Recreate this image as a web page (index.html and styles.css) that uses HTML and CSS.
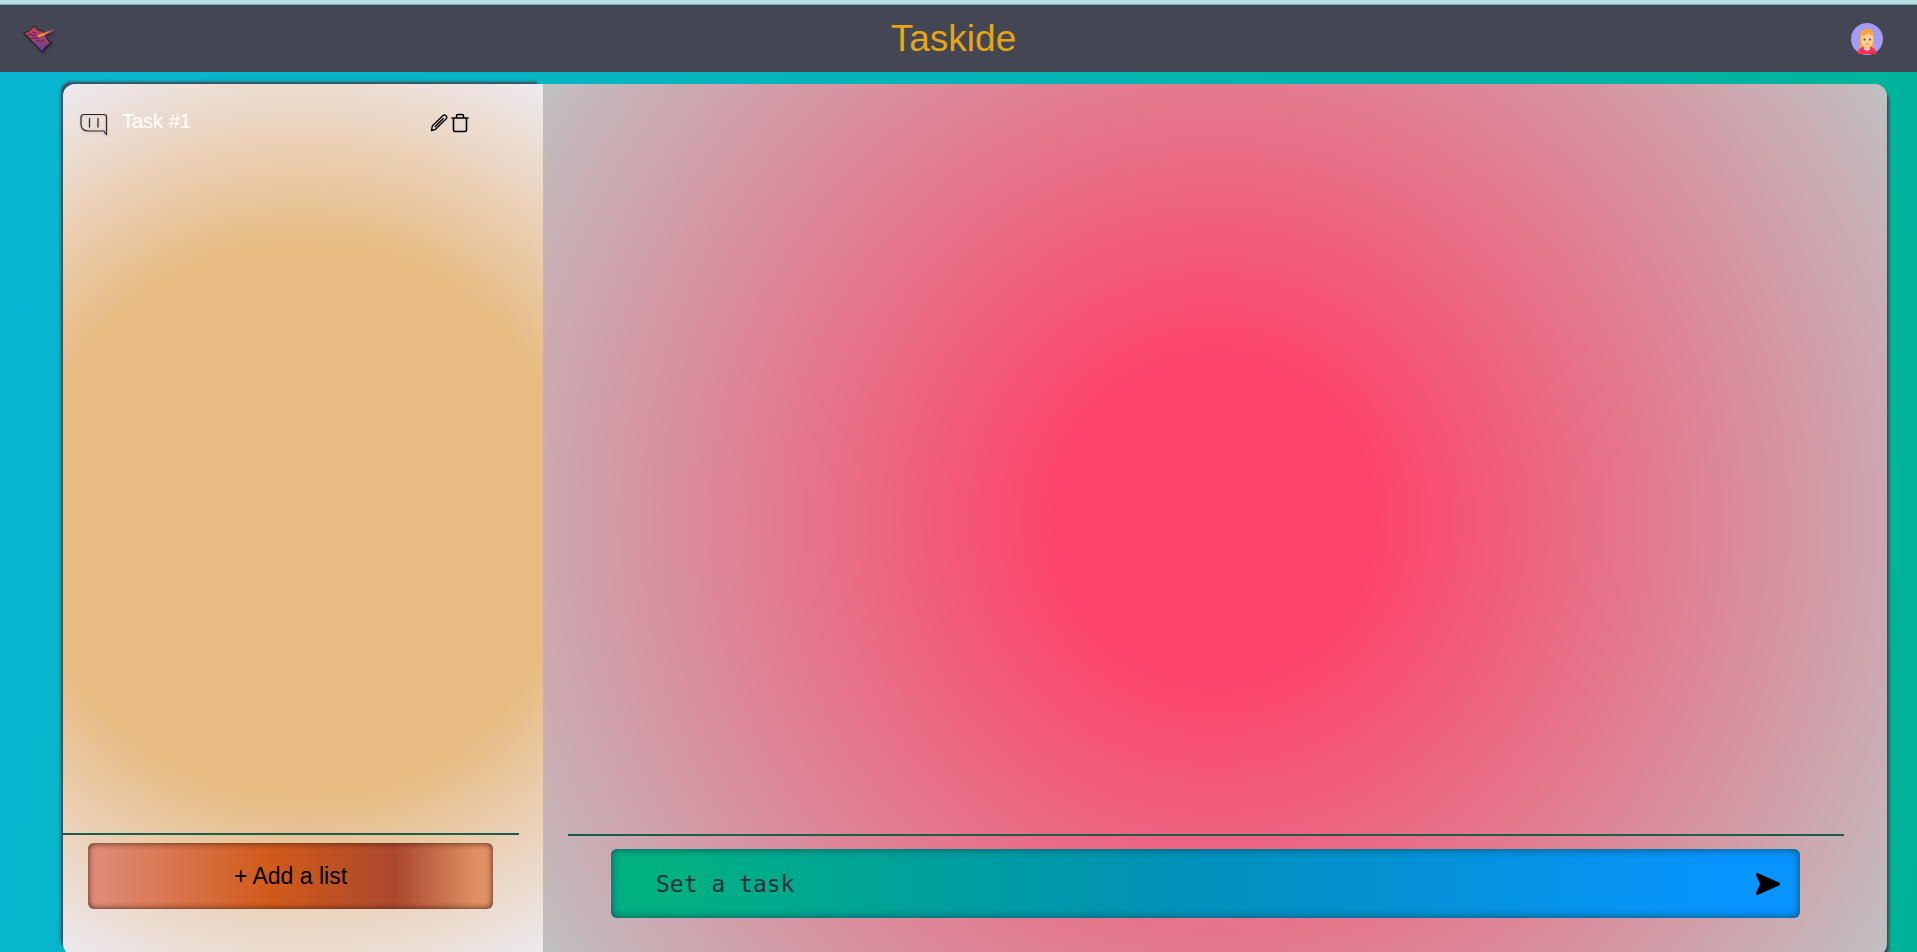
FILE: index.html
```html
<!DOCTYPE html>
<html lang="en">
<head>
<meta charset="utf-8">
<title>Taskide</title>
<link rel="stylesheet" href="styles.css">
</head>
<body>
<header class="header">
  <a class="logo" href="#" aria-label="Home">
    <svg width="36" height="36" viewBox="0 0 36 36">
      <defs>
        <linearGradient id="paper" x1="0" y1="0" x2="0" y2="1"><stop offset="0" stop-color="#cf3f48"/><stop offset="1" stop-color="#6a3fa0"/></linearGradient>
        <linearGradient id="pen" gradientUnits="userSpaceOnUse" x1="18" y1="15" x2="33" y2="8"><stop offset="0" stop-color="#ffa51f"/><stop offset=".35" stop-color="#f0953a"/><stop offset="1" stop-color="#8c3478"/></linearGradient>
      </defs>
      <path d="M13.500 4.500Q17 10 23 10L28 19Q30 22.500 32 21.500Q25 24 22.500 31L3.500 11.500Q11 11 13.500 4.500Z" fill="url(#paper)" stroke="#22192b" stroke-width="1"/>
      <path d="M8 14q3-2 4 0t4-1M11 18q3-3 4-1t4-1M16 21q3-3 4-1t5-2M12 11l4 1" fill="none" stroke="#5a2049" stroke-width="1"/>
      <path d="M19 15L32.500 9.500" stroke="url(#pen)" stroke-width="2.200" stroke-linecap="round"/>
    </svg>
  </a>
  <h1 class="title">Taskide</h1>
  <a class="avatar" href="#" aria-label="Profile">
    <svg width="32" height="32" viewBox="0 0 32 32">
      <circle cx="16" cy="16" r="16" fill="#a79af7"/>
      <path d="M9 25V13Q9 6 16 6L20 5.500L19.500 7Q23 8 23 13V25Z" fill="#fca53b"/>
      <path d="M13 21h6v4q-3 3-6 0Z" fill="#f3c288"/>
      <path d="M10 13Q15 13 18 10Q20 13 22 13V17Q22 24 16 24T10 17Z" fill="#fccf95"/>
      <path d="M7 31Q7 24 13 24Q16 29 19 24Q25 24 25.500 31Z" fill="#ff2f55"/>
      <path d="M13 24Q16 29 19 24V26Q16 29 13 26Z" fill="#fff"/>
      <circle cx="13.500" cy="16.500" r="1" fill="#4b3a35"/><circle cx="19" cy="16.500" r="1" fill="#4b3a35"/>
      <path d="M14.500 21q1.500 1 3 0" fill="none" stroke="#d46a50" stroke-width=".8"/>
    </svg>
  </a>
</header>
<main class="board">
  <aside class="lists">
    <ul class="list-items">
      <li class="list-item">
        <svg class="chat-icon" width="28" height="24" viewBox="0 0 28 24" fill="none" stroke="#2b2528" stroke-width="1.200">
          <path d="M4 1.500H24Q26.500 1.500 26.500 4V21.500Q24.500 20.500 24 18H9Q1 18 1 11V4.500Q1 1.500 4 1.500Z"/>
          <path d="M9.500 5V14.500M18 5V14.500"/>
        </svg>
        <span class="list-name">Task #1</span>
        <span class="list-actions">
          <button class="icon-button" aria-label="Rename list">
            <svg width="18" height="20" viewBox="0 0 18 20" fill="none" stroke="#000" stroke-width="1.400" stroke-linejoin="round"><path d="M1.500 17.500L2.300 13L13 2.500Q14.500 1.500 16 2.800T16.200 5.800L5.500 16.300ZM4.800 14L13.500 5.200"/></svg>
          </button>
          <button class="icon-button" aria-label="Delete list">
            <svg width="18" height="20" viewBox="0 0 18 20" fill="none" stroke="#000" stroke-width="1.600" stroke-linejoin="round"><path d="M.5 5H17.500M2.500 5V17Q2.500 18.500 4 18.500H14Q15.500 18.500 15.500 17V5M5.500 5V3Q5.500 1.500 7 1.500H11Q12.500 1.500 12.500 3V5"/></svg>
          </button>
        </span>
      </li>
    </ul>
    <div class="lists-footer">
      <button class="add-list">+ Add a list</button>
    </div>
  </aside>
  <section class="tasks">
    <form class="task-footer">
      <div class="task-field">
        <input class="task-input" type="text" placeholder="Set a task" aria-label="Set a task">
        <button class="icon-button" type="button" aria-label="Send">
          <svg width="26" height="24" viewBox="0 0 26 24"><path d="M2.500 1L24 10.500Q26 12 24 13.500L2.500 23Q.5 23 1 21L5 12L1 3Q.5 1 2.500 1Z"/></svg>
        </button>
      </div>
    </form>
  </section>
</main>
</body>
</html>
```
FILE: styles.css
```css
* {
  box-sizing: border-box;
}

body {
  margin: 0;
  height: 100vh;
  overflow: hidden;
  display: flex;
  flex-direction: column;
  font-family: Arial, "Liberation Sans", sans-serif;
  background: linear-gradient(100deg, #08b6d2, #00b398);
}

.header {
  flex: none;
  display: flex;
  align-items: center;
  justify-content: space-between;
  height: 72px;
  padding: 6px 34px 0 20px;
  background: linear-gradient(#b8e1e6 4px, #8ba9b0 4px, #8ba9b0 5px, #454653 5px);
}

.logo,
.avatar {
  display: flex;
}

.logo svg {
  filter: drop-shadow(1px 2px 1px #2a2a35);
}

.title {
  margin: 0;
  font-size: 37px;
  font-weight: 400;
  color: #e2a713;
}

.board {
  flex: none;
  display: flex;
  height: calc(100vh - 80px);
  margin: 12px 30px 0 63px;
}

.lists,
.tasks {
  display: flex;
  flex-direction: column;
}

.lists {
  width: 480px;
  border-radius: 12px 0 0 12px;
  background: radial-gradient(circle, #e7bb82 55%, #edeaf1);
  box-shadow: -4px -4px 3px -2px #40424a;
}

.tasks {
  flex: 1;
  border-radius: 0 12px 12px 0;
  background: radial-gradient(circle, #fd456a 20%, #c0c0c0);
  box-shadow: 4px 4px 3px -2px #40424a;
}

.list-items {
  flex: 1;
  margin: 0;
  padding: 24px 74px 0 17px;
  list-style: none;
}

.list-item {
  display: flex;
  align-items: center;
  height: 30px;
}

.chat-icon {
  margin-top: 4px;
  filter: drop-shadow(0 1px 1px #6664);
}

.list-name {
  margin-left: 14px;
  padding-bottom: 4px;
  font-size: 20px;
  line-height: 24px;
  color: #fff;
}

.list-actions {
  display: flex;
  gap: 3px;
  margin-left: auto;
}

.icon-button {
  display: flex;
  padding: 0;
  border: 0;
  background: none;
  cursor: pointer;
}

.lists-footer {
  height: 123px;
  margin-right: 24px;
  padding: 8px 26px 0 25px;
  border-top: 2px solid #1c5c4a;
}

.add-list {
  width: 100%;
  height: 66px;
  border: 0;
  border-radius: 6px;
  font-family: inherit;
  font-size: 23px;
  color: #000;
  background: linear-gradient(90deg, #df8a75 3%, #d15a19 45%, #ab492d 76%, #e08f65 96%);
  box-shadow: inset 0 0 6px #402018;
  cursor: pointer;
}

.task-footer {
  height: 122px;
  margin: auto 43px 0 25px;
  padding: 13px 44px 0 43px;
  border-top: 2px solid #1c5c4a;
}

.task-field {
  display: flex;
  align-items: center;
  height: 69px;
  padding: 0 19px 0 45px;
  border-radius: 6px;
  background: linear-gradient(90deg, #00b081 6%, #0091b9 48%, #0894ff 94%);
  box-shadow: inset 0 0 8px #154b5c;
}

.task-input {
  flex: 1;
  padding: 0;
  border: 0;
  outline: 0;
  background: none;
  font-family: Consolas, "DejaVu Sans Mono", monospace;
  font-size: 23px;
  color: #2b3138;
}

.task-input::placeholder {
  color: #2b3138;
  opacity: 1;
}
```
